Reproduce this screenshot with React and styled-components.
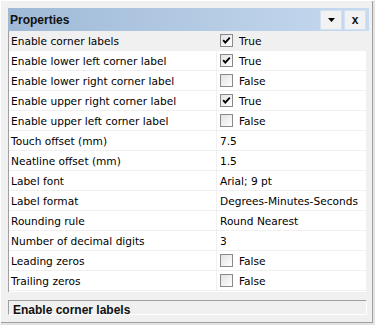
import React from "react";
import styled, { createGlobalStyle } from "styled-components";

const Global = createGlobalStyle`
  html, body { margin: 0; padding: 0; background: #f0f0f0; }
  body { font-family: "DejaVu Sans", "Liberation Sans", sans-serif; }
`;

const Window = styled.div`
  box-sizing: border-box;
  width: 375px;
  height: 325px;
  background: #f0f0f0;
  border-top: 1px solid #ffffff;
  border-left: 1px solid #ffffff;
  border-right: 2px solid #e3e3e3;
  border-bottom: 2px solid #e3e3e3;
  box-shadow: inset -1px -1px 0 #a0a0a0;
  padding: 7px 4px 0 7px;
  display: flex;
  flex-direction: column;
  overflow: hidden;
`;

const TitleBar = styled.div`
  height: 23px;
  display: flex;
  align-items: center;
  padding: 0 3px 0 2px;
  background: linear-gradient(to right, #9fb9d6, #c6daf0);
`;

const Title = styled.div`
  flex: 1;
  font-family: "Liberation Sans", Arial, sans-serif;
  font-weight: bold;
  font-size: 12px;
  color: #111;
`;

const TitleButtons = styled.div`
  display: flex;
  gap: 2px;
`;

const TitleButton = styled.div`
  box-sizing: border-box;
  width: 22px;
  height: 20px;
  background: #f2f2f2;
  border: 1px solid #d3e1f0;
  display: flex;
  align-items: center;
  justify-content: center;
  font-family: "Liberation Sans", Arial, sans-serif;
  font-size: 12px;
  font-weight: bold;
  color: #111;
  line-height: 1;
`;

const Grid = styled.div`
  margin-right: 2px;
  background: #ffffff;
  border-left: 1px solid #a0a0a0;
  border-right: 1px solid #f0f0f0;
  height: 261px;
  display: flex;
  flex-direction: column;
`;

const Row = styled.div`
  display: grid;
  grid-template-columns: 208px 1fr;
  height: 20px;
  box-sizing: border-box;
  border-bottom: 1px solid #f0f0f0;
  background: ${(p) => (p.$selected ? "#f0f0f0" : "#ffffff")};
  font-size: 10.6px;
  color: #000;
`;

const NameCell = styled.div`
  display: flex;
  align-items: center;
  padding-left: 2px;
  border-right: 1px solid #f0f0f0;
  white-space: nowrap;
  overflow: hidden;
`;

const ValueCell = styled.div`
  display: flex;
  align-items: center;
  padding-left: 3px;
  gap: 6px;
  white-space: nowrap;
  overflow: hidden;
`;

const Box = styled.span`
  box-sizing: border-box;
  width: 13px;
  height: 13px;
  border: 1px solid #8a8a8a;
  background: linear-gradient(135deg, #e2e2e2, #ffffff);
  display: flex;
  align-items: center;
  justify-content: center;
`;

const Description = styled.div`
  margin-top: 8px;
  margin-right: 2px;
  height: 15px;
  box-sizing: border-box;
  border-top: 1px solid #a0a0a0;
  border-left: 1px solid #a0a0a0;
  border-right: 1px solid #ffffff;
  border-bottom: 1px solid #ffffff;
  padding: 2px 0 0 4px;
  font-family: "Liberation Sans", Arial, sans-serif;
  font-size: 12px;
  font-weight: bold;
  color: #111;
  line-height: 14px;
  overflow: hidden;
  white-space: nowrap;
`;

const Check = ({ on }) => (
  <Box>
    {on && (
      <svg width="9" height="9" viewBox="0 0 9 9">
        <path d="M1.2 4.2 L3.3 6.6 L7.8 1.6" stroke="#000" strokeWidth="1.9" fill="none" />
      </svg>
    )}
  </Box>
);

const rows = [
  ["Enable corner labels", true],
  ["Enable lower left corner label", true],
  ["Enable lower right corner label", false],
  ["Enable upper right corner label", true],
  ["Enable upper left corner label", false],
  ["Touch offset (mm)", "7.5"],
  ["Neatline offset (mm)", "1.5"],
  ["Label font", "Arial; 9 pt"],
  ["Label format", "Degrees-Minutes-Seconds"],
  ["Rounding rule", "Round Nearest"],
  ["Number of decimal digits", "3"],
  ["Leading zeros", false],
  ["Trailing zeros", false],
];

export default function App() {
  return (
    <>
      <Global />
      <Window>
        <TitleBar>
          <Title>Properties</Title>
          <TitleButtons>
            <TitleButton>
              <svg width="7" height="4" viewBox="0 0 7 4">
                <path d="M0 0 H7 L3.5 4 Z" fill="#000" />
              </svg>
            </TitleButton>
            <TitleButton>x</TitleButton>
          </TitleButtons>
        </TitleBar>
        <Grid>
          {rows.map(([name, v], i) => (
            <Row key={name} $selected={i === 0}>
              <NameCell>{name}</NameCell>
              <ValueCell>
                {typeof v === "boolean" ? (
                  <>
                    <Check on={v} />
                    <span>{v ? "True" : "False"}</span>
                  </>
                ) : (
                  v
                )}
              </ValueCell>
            </Row>
          ))}
        </Grid>
        <Description>Enable corner labels</Description>
      </Window>
    </>
  );
}
